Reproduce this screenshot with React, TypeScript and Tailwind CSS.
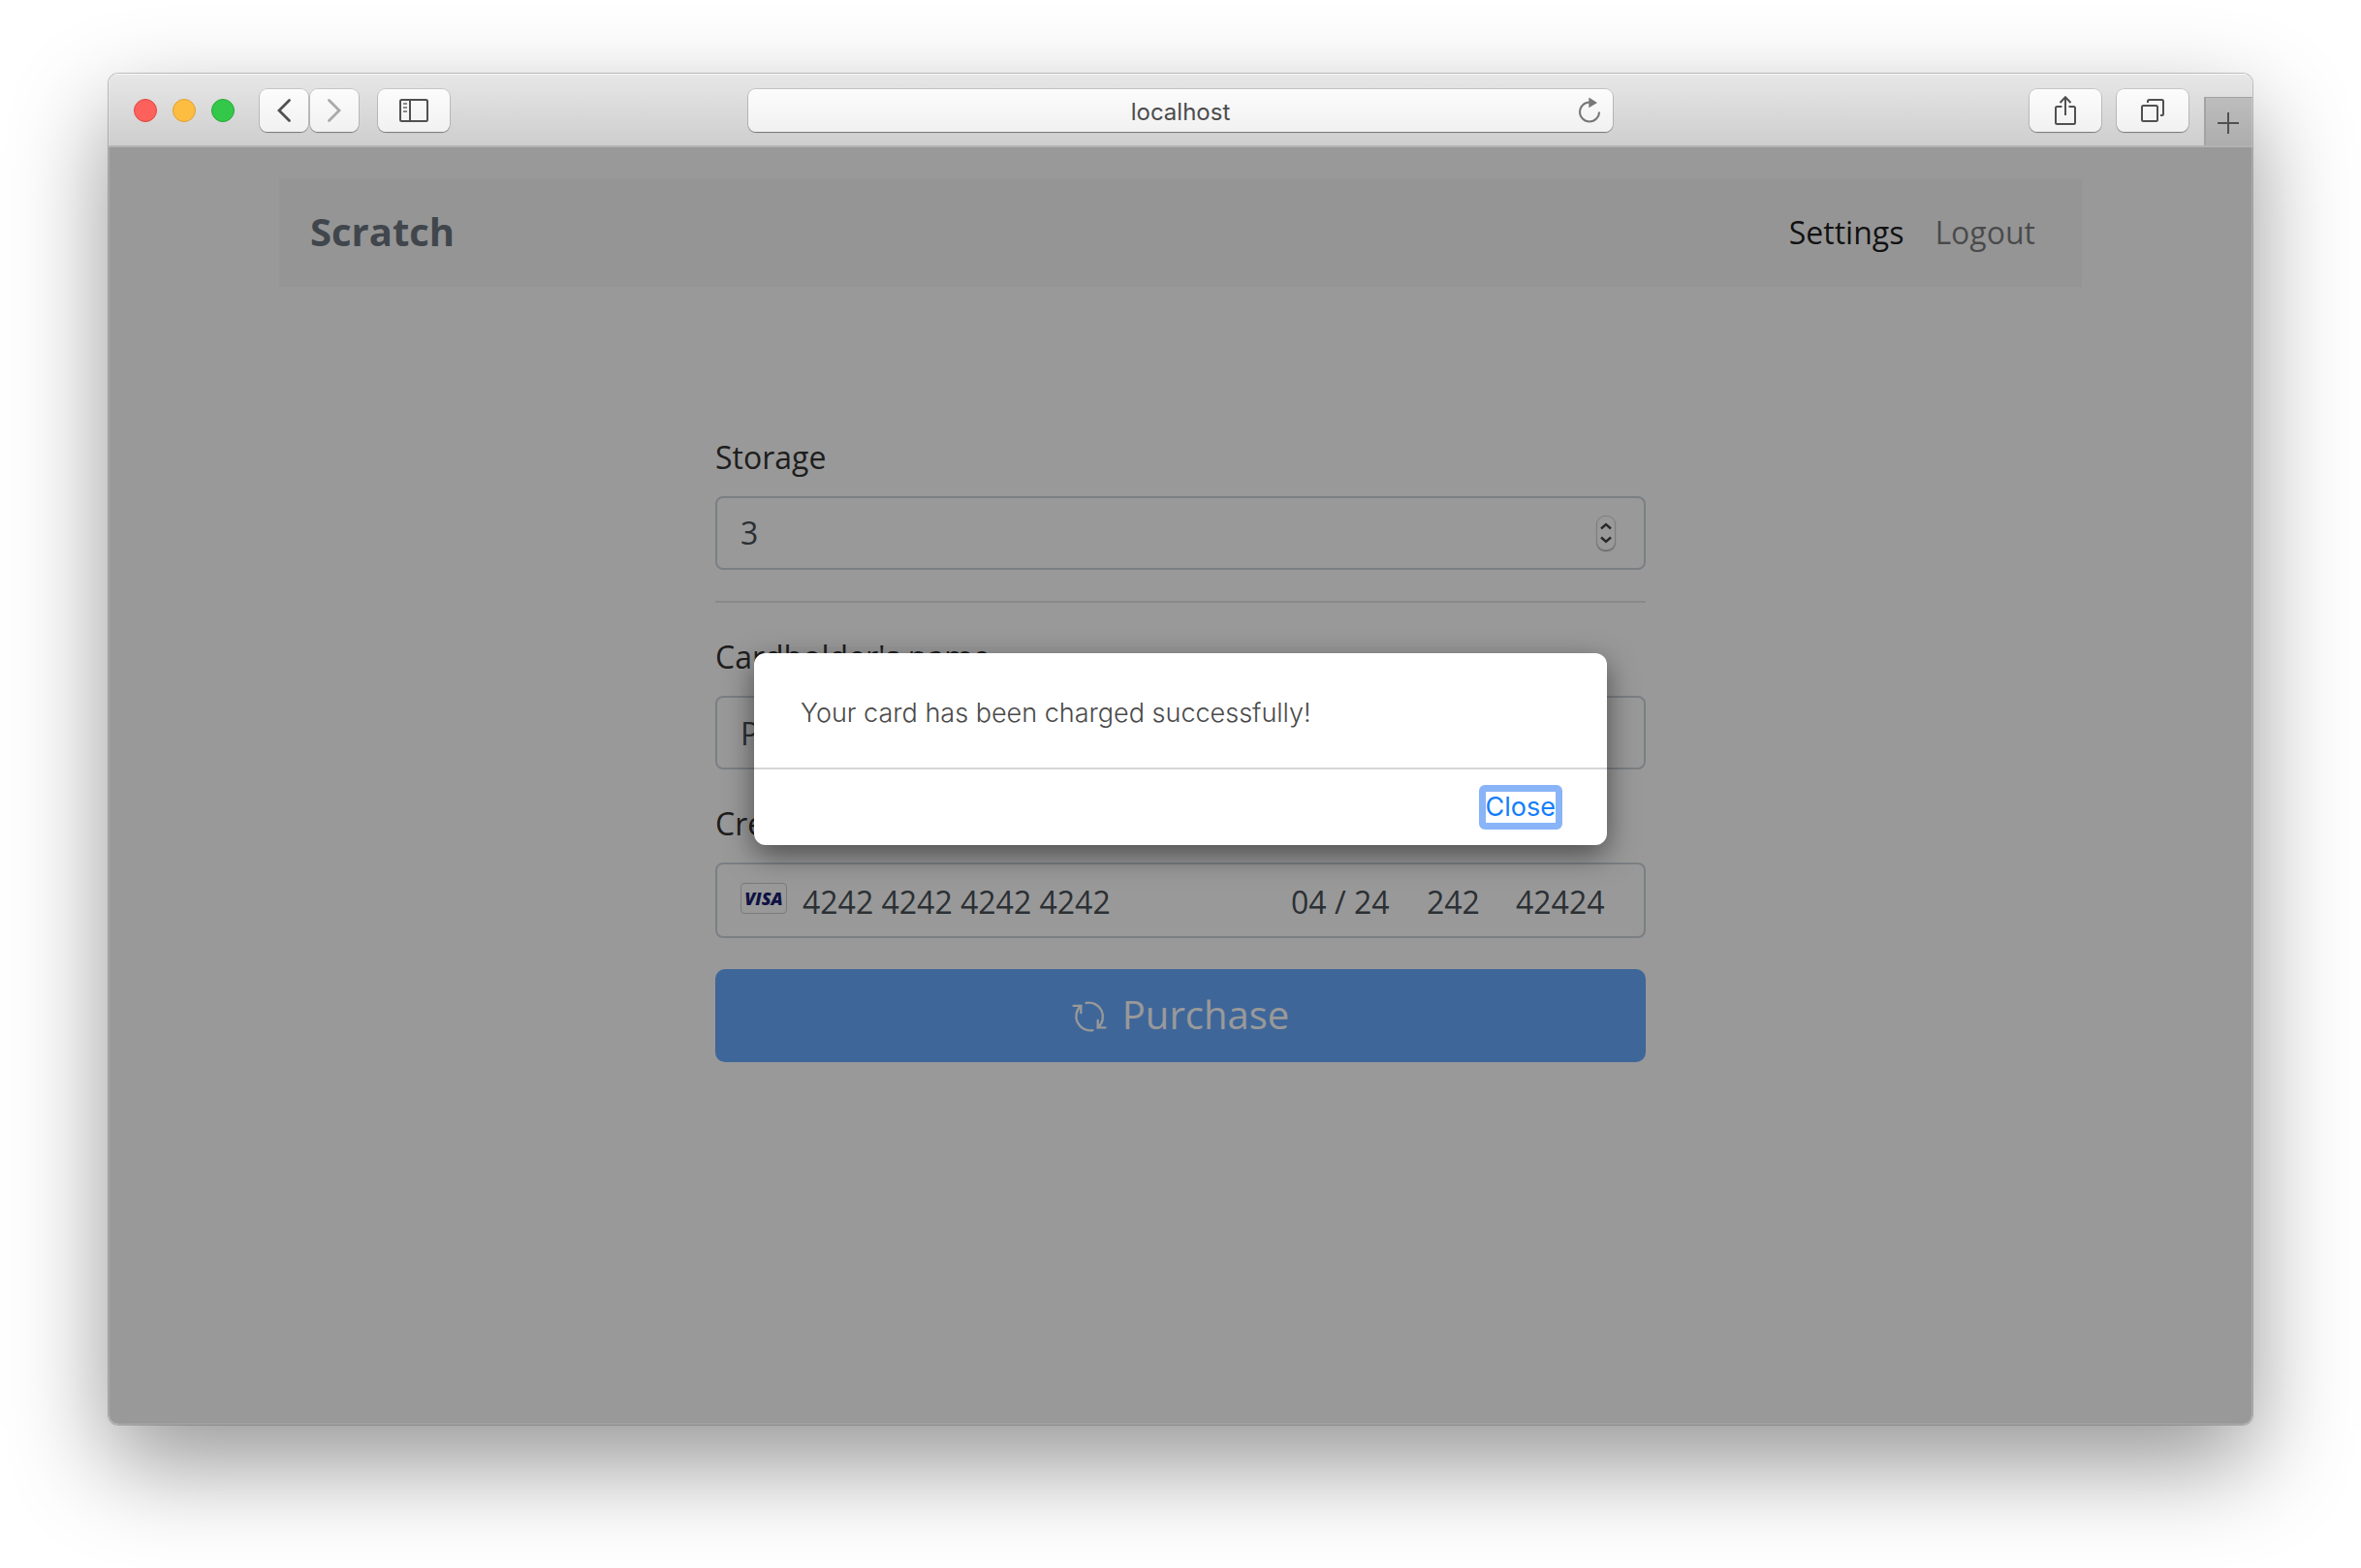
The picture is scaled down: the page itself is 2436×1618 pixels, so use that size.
import React from "react";

const SANS = "font-['Open_Sans','Noto_Sans',sans-serif]";
const UI = "font-['Inter','Liberation_Sans',sans-serif]";

const toolButton =
  "flex h-11 items-center justify-center rounded-[8px] bg-linear-to-b from-[#fcfcfc] to-[#f1f1f1] text-[#505050] shadow-[0_0_0_1px_rgba(0,0,0,0.12),0_1px_1px_rgba(0,0,0,0.35)]";

function SidebarIcon() {
  return (
    <svg width="30" height="24" viewBox="0 0 30 24" fill="none" stroke="currentColor" strokeWidth="2" aria-hidden="true">
      <rect x="1" y="1" width="28" height="22" rx="1.5" />
      <path d="M11 1v22" />
      <path d="M4 5h4M4 9h4M4 13h4" strokeWidth="2" stroke="#8a8a8a" />
    </svg>
  );
}

function ShareIcon() {
  return (
    <svg width="24" height="32" viewBox="0 0 24 32" fill="none" stroke="currentColor" strokeWidth="2" aria-hidden="true">
      <path d="M8.500 12H3.500Q2 12 2 13.500v15Q2 30 3.500 30h17q1.500 0 1.500-1.500v-15Q22 12 20.500 12h-5" />
      <path d="M12 21V2.500M6.500 8 12 2.200 17.500 8" />
    </svg>
  );
}

function TabsIcon() {
  return (
    <svg width="26" height="26" viewBox="0 0 26 26" fill="none" stroke="currentColor" strokeWidth="2" aria-hidden="true">
      <rect x="2" y="8" width="16" height="16" rx="1.500" />
      <path d="M8 5V3.500Q8 2 9.500 2h13Q24 2 24 3.500v13q0 1.500-1.500 1.500H21" />
    </svg>
  );
}

function ReloadIcon() {
  return (
    <svg width="24" height="28" viewBox="0 0 24 28" fill="none" aria-hidden="true">
      <path d="M22 15.500A10 10 0 1 1 12 5.500" stroke="#777" strokeWidth="2" />
      <path d="M11.300 0.500 20 6 11.300 11.300Z" fill="#777" />
    </svg>
  );
}

function LoopIcon() {
  return (
    <svg width="36" height="36" viewBox="0 0 36 36" fill="none" stroke="currentColor" strokeWidth="2.300" strokeLinecap="round" aria-hidden="true">
      <path d="M14.600 4.900A14.500 14.500 0 0 1 26.700 30.300" />
      <path d="M26.700 23V30.300H34.500" />
      <path d="M21.400 33.100A14.500 14.500 0 0 1 9.300 7.900" />
      <path d="M9.300 15.200V7.900H1.600" />
    </svg>
  );
}

function Toolbar() {
  return (
    <header className={`flex h-19 items-center border-b-2 border-[#b3b3b3] bg-linear-to-b from-[#e7e7e7] to-[#cecece] pt-0.5 shadow-[inset_0_1px_0_#f7f7f7] ${UI}`}>
      <div className="flex flex-1 items-center">
        <div className="mx-[26px] flex gap-4">
          <button aria-label="Close window" className="size-6 rounded-full border border-[#e2463f] bg-[#fc615c]" />
          <button aria-label="Minimize window" className="size-6 rounded-full border border-[#dea034] bg-[#fdbd41]" />
          <button aria-label="Zoom window" className="size-6 rounded-full border border-[#27aa35] bg-[#34c84a]" />
        </div>
        <div className="mr-5 flex gap-0.5">
          <button aria-label="Back" className={`w-[50px] ${toolButton}`}>
            <svg width="16" height="26" viewBox="0 0 16 26" fill="none" stroke="#505050" strokeWidth="2.800" strokeLinecap="round" aria-hidden="true">
              <path d="M13.500 2.500 3 13l10.500 10.500" />
            </svg>
          </button>
          <button aria-label="Forward" className={`w-[50px] ${toolButton}`}>
            <svg width="16" height="26" viewBox="0 0 16 26" fill="none" stroke="#a9a9a9" strokeWidth="2.800" strokeLinecap="round" aria-hidden="true">
              <path d="M2.500 2.500 13 13 2.500 23.500" />
            </svg>
          </button>
        </div>
        <button aria-label="Show sidebar" className={`w-[74px] ${toolButton}`}>
          <SidebarIcon />
        </button>
      </div>

      <div className="flex h-11 w-[892px] items-center rounded-[8px] bg-linear-to-b from-[#fcfcfc] to-[#f1f1f1] pr-3 pl-9 shadow-[0_0_0_1px_rgba(0,0,0,0.14),0_1px_1px_rgba(0,0,0,0.35)]">
        <input
          aria-label="Address"
          defaultValue="localhost"
          className="h-9 min-w-0 flex-1 bg-transparent pt-0.5 text-center text-2xl text-[#4c4c4c] outline-none"
        />
        <button aria-label="Reload" className="flex w-6 justify-center">
          <ReloadIcon />
        </button>
      </div>

      <div className="flex flex-1 items-center justify-end gap-4 self-stretch">
        <button aria-label="Share" className={`w-[74px] ${toolButton}`}>
          <ShareIcon />
        </button>
        <button aria-label="Show tabs" className={`w-[74px] ${toolButton}`}>
          <TabsIcon />
        </button>
        <button aria-label="New tab" className="flex h-[50px] w-[50px] items-center justify-center self-end border-t border-l-2 border-[#a3a3a3] bg-linear-to-b from-[#bdbdbd] to-[#adadad] pt-0.5 pr-0.5">
          <svg width="22" height="22" viewBox="0 0 22 22" stroke="#505050" strokeWidth="2" aria-hidden="true">
            <path d="M11 0v22M0 11h22" />
          </svg>
        </button>
      </div>
    </header>
  );
}

const label = "mb-4 block text-[32px] leading-12 text-[#333]";
const field = "rounded-[8px] border-2 border-[#ced4da] bg-white text-[32px] leading-12 text-[#495057]";
const bare = "h-12 bg-transparent outline-none";

function PurchaseForm() {
  return (
    <form className="mx-auto mt-[152px] w-full max-w-[960px]">
      <label htmlFor="storage" className={label}>Storage</label>
      <div className={`flex h-19 items-center pr-[29px] pl-6 ${field}`}>
        <input
          id="storage"
          type="number"
          defaultValue={3}
          className={`min-w-0 flex-1 [appearance:textfield] [&::-webkit-inner-spin-button]:appearance-none ${bare}`}
        />
        <div className="flex h-9 w-5 flex-col items-center justify-center gap-1.5 rounded-[9px] border border-[#d2d2d2] bg-white text-[#444] shadow-[0_1px_1px_rgba(0,0,0,0.35)]">
          <button type="button" aria-label="Increase storage">
            <svg width="12" height="8" viewBox="0 0 12 8" fill="none" stroke="currentColor" strokeWidth="2.400" aria-hidden="true">
              <path d="M1 6.500 6 2l5 4.500" />
            </svg>
          </button>
          <button type="button" aria-label="Decrease storage">
            <svg width="12" height="8" viewBox="0 0 12 8" fill="none" stroke="currentColor" strokeWidth="2.400" aria-hidden="true">
              <path d="M1 1.500 6 6l5-4.500" />
            </svg>
          </button>
        </div>
      </div>

      <hr className="my-8 border-t-2 border-[#e5e5e5]" />

      <label htmlFor="holder" className={label}>Cardholder's name</label>
      <input id="holder" defaultValue="P" className={`mb-8 block h-19 w-full px-6 ${field}`} />

      <label htmlFor="card" className={label}>Credit card</label>
      <div className={`flex items-start pt-[15px] pr-[22px] pb-[11px] pl-6 ${field}`}>
        <span className="mt-1 mr-4 flex h-8 w-12 items-center justify-center rounded-[4px] border border-[#ccc] text-[18px] leading-4 font-extrabold text-[#1a1f71] italic">
          VISA
        </span>
        <input id="card" defaultValue="4242 4242 4242 4242" className={`min-w-0 flex-1 ${bare}`} />
        <input aria-label="Expiry date" defaultValue="04 / 24" className={`mr-8 w-[108px] ${bare}`} />
        <input aria-label="Security code" defaultValue="242" className={`mr-8 w-[60px] ${bare}`} />
        <input aria-label="Postal code" defaultValue="42424" className={`w-[110px] ${bare}`} />
      </div>

      <button
        type="button"
        className="mt-8 flex h-24 w-full items-center justify-center gap-4 rounded-[10px] bg-[#69abff] text-[40px] leading-[60px] text-white"
      >
        <LoopIcon />
        <span className="pb-0.5">Purchase</span>
      </button>
    </form>
  );
}

export default function App() {
  return (
    <div className="flex min-h-screen flex-col bg-white px-28 pt-19 pb-[148px]">
      <div className="relative flex flex-1 flex-col rounded-[10px] shadow-[0_0_0_1px_rgba(0,0,0,0.22),0_40px_100px_rgba(0,0,0,0.42)]">
        <div className="flex flex-1 flex-col overflow-hidden rounded-[10px]">
          <Toolbar />
          <main className={`relative flex-1 bg-white px-8 pt-8 ${SANS}`}>
            <nav className="mx-auto flex h-28 max-w-[1860px] items-center justify-between bg-[#f8f9fa] px-8">
              <a href="#home" className="pb-0.5 text-[40px] leading-[60px] font-bold text-[#6c757d]">Scratch</a>
              <div className="flex text-[32px] leading-12">
                <a href="#settings" className="px-4 text-black/90">Settings</a>
                <a href="#logout" className="px-4 text-black/50">Logout</a>
              </div>
            </nav>
            <PurchaseForm />

            <div className={`absolute inset-0 flex items-start justify-center bg-black/40 pt-[522px] ${UI}`}>
              <div
                role="dialog"
                aria-modal="true"
                aria-labelledby="dialog-message"
                className="w-[880px] rounded-[12px] bg-white shadow-[0_10px_30px_rgba(0,0,0,0.5)]"
              >
                <p id="dialog-message" className="px-12 pt-10 pb-[34px] text-[27px] leading-11 font-light text-[#4a4a4a]">
                  Your card has been charged successfully!
                </p>
                <div className="flex justify-end border-t-2 border-[#d6d6d6] pt-4 pr-[46px] pb-4">
                  <button className="rounded-[6px] border-[7px] border-[#89b4f8] text-[27px] leading-8 text-[#147efb]">
                    Close
                  </button>
                </div>
              </div>
            </div>
          </main>
        </div>
        <div className="pointer-events-none absolute inset-0 rounded-[10px] shadow-[inset_0_0_0_1px_rgba(255,255,255,0.18)]" />
      </div>
    </div>
  );
}
